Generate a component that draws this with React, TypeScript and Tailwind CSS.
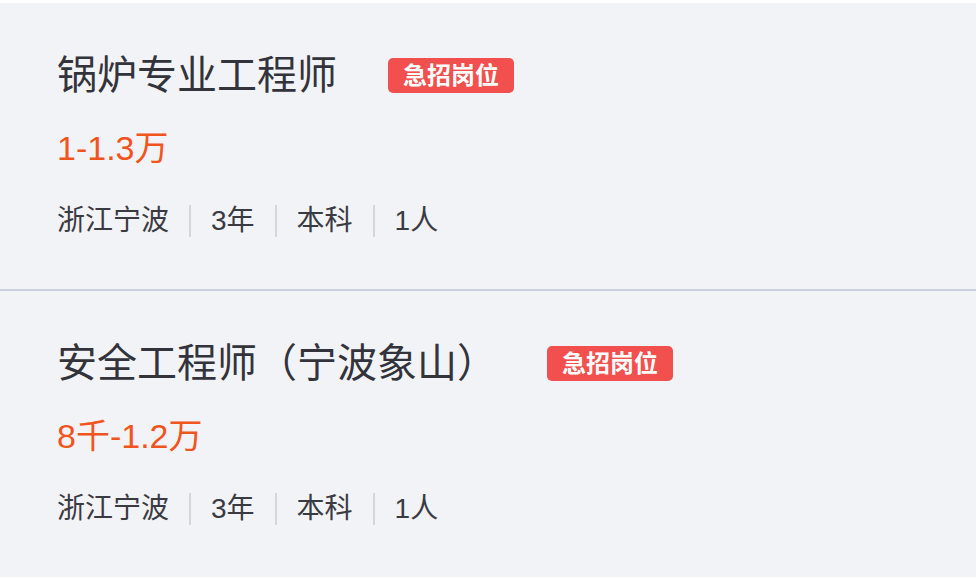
const font = { fontFamily: '"Liberation Sans", "Noto Sans CJK SC", sans-serif' };

type Job = {
  title: string;
  salary: string;
  meta: string[];
  badgeGap: string;
};

const jobs: Job[] = [
  { title: "锅炉专业工程师", salary: "1-1.3万", meta: ["浙江宁波", "3年", "本科", "1人"], badgeGap: "ml-[51px]" },
  { title: "安全工程师（宁波象山）", salary: "8千-1.2万", meta: ["浙江宁波", "3年", "本科", "1人"], badgeGap: "ml-[50px]" },
];

export default function App() {
  return (
    <div className="h-[578px] w-[976px] overflow-hidden bg-white pt-[3px]" style={font}>
      <JobItem job={jobs[0]} />
      <div className="h-[2px] bg-[#c9d2dc]" />
      <JobItem job={jobs[1]} />
    </div>
  );
}

function JobItem({ job }: { job: Job }) {
  return (
    <div className="h-[286px] bg-[#f2f3f6] pl-[57px]">
      <div className="flex items-center pt-[52px]">
        <h2 className="text-[40px] leading-[40px] font-normal text-[#33333b]">{job.title}</h2>
        <span className={`${job.badgeGap} rounded-[5px] bg-[#f24f4f] px-[15px] text-[24px] leading-[35px] font-bold text-white`}>
          急招岗位
        </span>
      </div>
      <div className="mt-[36px] text-[34px] leading-[34px] text-[#f2541d]">{job.salary}</div>
      <div className="mt-[40px] flex items-center text-[28px] leading-[32px] text-[#3a3a42]">
        {job.meta.map((m, i) => (
          <div key={m} className="flex items-center">
            {i > 0 ? <span className="mx-[20px] h-[32px] w-[2px] bg-[#d3d6dc]" /> : null}
            <span>{m}</span>
          </div>
        ))}
      </div>
    </div>
  );
}
